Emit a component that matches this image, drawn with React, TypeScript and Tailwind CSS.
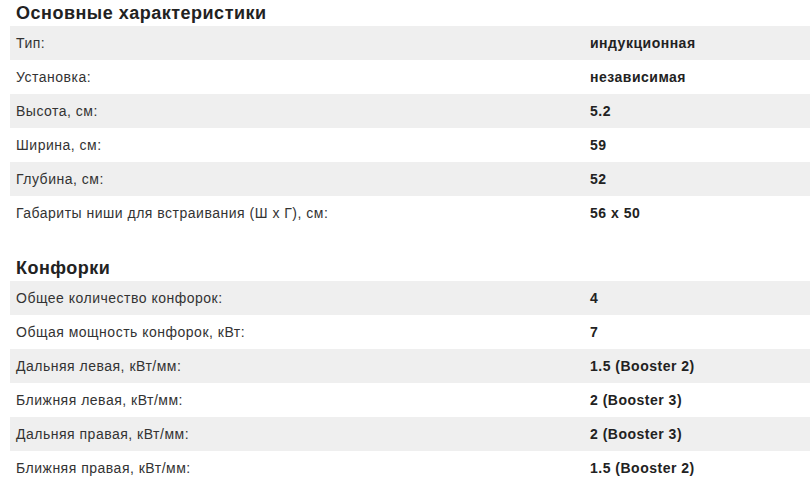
const SECTIONS = [
  {
    title: 'Основные характеристики',
    rows: [
      ['Тип:', 'индукционная'],
      ['Установка:', 'независимая'],
      ['Высота, см:', '5.2'],
      ['Ширина, см:', '59'],
      ['Глубина, см:', '52'],
      ['Габариты ниши для встраивания (Ш х Г), см:', '56 x 50'],
    ],
  },
  {
    title: 'Конфорки',
    rows: [
      ['Общее количество конфорок:', '4'],
      ['Общая мощность конфорок, кВт:', '7'],
      ['Дальняя левая, кВт/мм:', '1.5 (Booster 2)'],
      ['Ближняя левая, кВт/мм:', '2 (Booster 3)'],
      ['Дальняя правая, кВт/мм:', '2 (Booster 3)'],
      ['Ближняя правая, кВт/мм:', '1.5 (Booster 2)'],
    ],
  },
];

export default function App() {
  return (
    <div className="w-[810px] h-[502px] bg-white overflow-hidden font-['Liberation_Sans',Arial,sans-serif]">
      {SECTIONS.map((section, si) => (
        <div key={section.title} className={si > 0 ? 'mt-[25px]' : ''}>
          {/* Section title */}
          <h2 className="h-[26px] pl-4 flex items-center text-[18px] font-bold tracking-[0.5px] text-[#222] leading-none">
            {section.title}
          </h2>
          <div className="ml-[10px]">
            {section.rows.map(([label, value], i) => (
              <div
                key={label}
                className={`grid grid-cols-[574px_1fr] h-[34px] items-center text-[14px] tracking-[0.5px] ${i % 2 === 0 ? 'bg-[#efefef]' : 'bg-white'}`}
              >
                <div className="px-[6px] text-[#333]">{label}</div>
                <div className="px-[6px] font-bold text-[#222]">{value}</div>
              </div>
            ))}
          </div>
        </div>
      ))}
    </div>
  );
}
